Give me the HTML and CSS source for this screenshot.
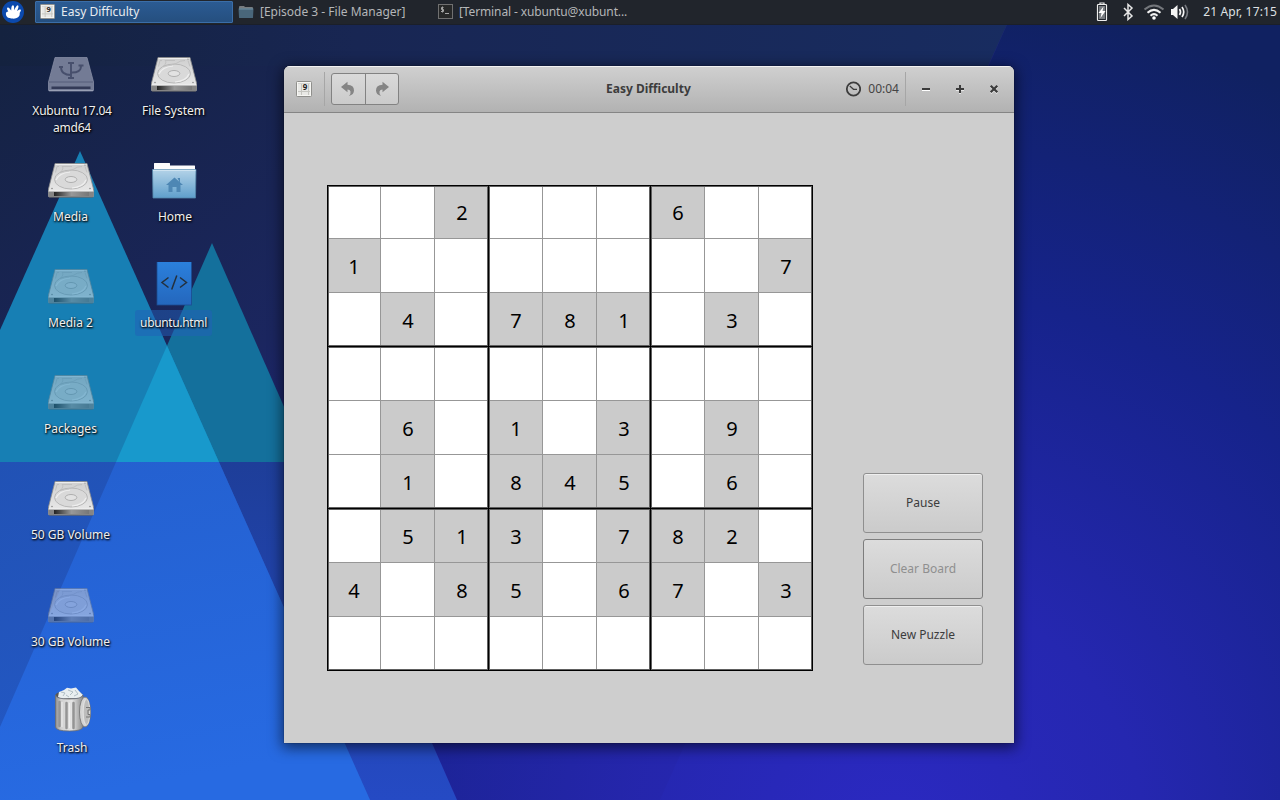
FILE: index.html
```html
<!DOCTYPE html>
<html lang="en">
<head>
<meta charset="utf-8">
<title>Easy Difficulty</title>
<link rel="stylesheet" href="styles.css">
</head>
<body>
<svg class="wallpaper" width="1280" height="800" viewBox="0 0 1280 800">
  <defs>
    <linearGradient id="wl" gradientUnits="userSpaceOnUse" x1="0" y1="0" x2="520" y2="800"><stop offset="0" stop-color="#14223f"/><stop offset=".45" stop-color="#1b265f"/><stop offset=".8" stop-color="#21249a"/><stop offset="1" stop-color="#24229f"/></linearGradient>
    <radialGradient id="wr" gradientUnits="userSpaceOnUse" cx="890" cy="840" r="850"><stop offset="0" stop-color="#2b29c2"/><stop offset=".3" stop-color="#2527b0"/><stop offset=".65" stop-color="#16238b"/><stop offset="1" stop-color="#102161"/></radialGradient>
    <linearGradient id="wt" x1="0" y1="0" x2="1" y2="0"><stop offset="0" stop-color="#14223f"/><stop offset=".35" stop-color="#182653"/><stop offset="1" stop-color="#182c60"/></linearGradient>
    <linearGradient id="wa" gradientUnits="userSpaceOnUse" x1="0" y1="462" x2="120" y2="740"><stop offset="0" stop-color="#2152b5"/><stop offset="1" stop-color="#2358c4"/></linearGradient>
    <linearGradient id="wo" gradientUnits="userSpaceOnUse" x1="0" y1="462" x2="60" y2="800"><stop offset="0" stop-color="#2460cf"/><stop offset="1" stop-color="#276ae2"/></linearGradient>
    <linearGradient id="wb" gradientUnits="userSpaceOnUse" x1="0" y1="462" x2="0" y2="800"><stop offset="0" stop-color="#1e3e99"/><stop offset="1" stop-color="#254ac4"/></linearGradient>
    <clipPath id="top"><rect width="1280" height="462"/></clipPath>
    <clipPath id="bot"><rect y="462" width="1280" height="338"/></clipPath>
    <clipPath id="inA"><path d="M80 151L370 800H-210z"/></clipPath>
  </defs>
  <rect width="1280" height="800" fill="url(#wr)"/>
  <path d="M0 0H1018L660 800H0z" fill="url(#wl)"/>
  <path d="M0 0H1018L988 66H0z" fill="url(#wt)"/>
  <path d="M457 800L400 670H1280V800z" fill="url(#wr)" opacity=".75"/>
  <g clip-path="url(#top)">
    <path d="M212 243L457 800H-32z" fill="#14709c"/>
    <path d="M80 151L370 800H-210z" fill="#177fb4"/>
    <path d="M212 243L457 800H-32z" fill="#1899cc" clip-path="url(#inA)"/>
  </g>
  <g clip-path="url(#bot)">
    <path d="M212 243L457 800H-32z" fill="url(#wb)"/>
    <path d="M80 151L370 800H-210z" fill="url(#wa)"/>
    <path d="M212 243L457 800H-32z" fill="url(#wo)" clip-path="url(#inA)"/>
  </g>
</svg>

<svg class="defs" width="0" height="0">
  <defs>
    <linearGradient id="dg" x1="0" y1="0" x2="0" y2="1"><stop offset="0" stop-color="#cfcfcf"/><stop offset="1" stop-color="#ececec"/></linearGradient>
    <linearGradient id="df" x1="0" y1="0" x2="1" y2="0"><stop offset="0" stop-color="#222"/><stop offset=".5" stop-color="#999"/><stop offset="1" stop-color="#777"/></linearGradient>
    <linearGradient id="fg" x1="0" y1="0" x2="0" y2="1"><stop offset="0" stop-color="#b4d3e8"/><stop offset="1" stop-color="#5f9fcc"/></linearGradient>
    <linearGradient id="hg" x1="0" y1="0" x2="0" y2="1"><stop offset="0" stop-color="#2b80dc"/><stop offset="1" stop-color="#2467bd"/></linearGradient>
    <linearGradient id="tg" x1="0" y1="0" x2="1" y2="0"><stop offset="0" stop-color="#8c8c8c"/><stop offset=".2" stop-color="#d0d0d0"/><stop offset=".6" stop-color="#e4e4e4"/><stop offset="1" stop-color="#8a8a8a"/></linearGradient>
    <symbol id="drive" viewBox="0 0 48 48">
      <path d="M8 7.500H40L46.500 33V40Q46.500 41 45.500 41H2.500Q1.500 41 1.500 40V33z" fill="url(#dg)" stroke="#8b8b8b" stroke-width=".8"/>
      <path d="M8.500 8.500H39.500" stroke="#eee"/>
      <ellipse cx="24" cy="23.500" rx="16.500" ry="9.500" fill="#d9d9d9" stroke="#b4b4b4" stroke-width=".9"/>
      <path d="M13 16q8 1 14-3q3-2.500 8-2.500M12 10.500h-2l-1.500 6M38 10.500l2 6M14 16q3-4 1-5.500h10" fill="none" stroke="#bbb" stroke-width=".8"/>
      <path d="M9 24q3-7 14-8M39 24q-3 7-14 8" stroke="#efefef" stroke-width="1.200" fill="none"/>
      <ellipse cx="24" cy="23.500" rx="5.800" ry="3" fill="#e2e2e2" stroke="#a9a9a9" stroke-width=".9"/>
      <circle cx="5" cy="32.500" r=".7" fill="#777"/><circle cx="43" cy="32.500" r=".7" fill="#777"/><circle cx="38" cy="9" r=".6" fill="#777"/>
      <path d="M1.500 35H46.500V40.500H1.500z" fill="#858585"/>
      <path d="M7 36H42V40H7z" fill="url(#df)"/>
      <path d="M1.500 35H46.500" stroke="#f2f2f2" stroke-width="1"/>
      <path d="M2 41H46" stroke="#555" stroke-width=".8"/>
    </symbol>
    <symbol id="sudoku" viewBox="0 0 16 16">
      <rect x=".5" y=".5" width="15" height="15" rx=".8" fill="#f6f6f3" stroke="#8f8f8c"/>
      <rect x="2" y="2" width="12" height="12" fill="#e9e9e6"/>
      <path d="M5.500 2v12M12.500 2v12M2 10.500h12" stroke="#c6c6c1" fill="none"/>
      <path d="M2 2.500h12" stroke="#d5d5d2"/>
      <text x="6.800" y="9" class="nine">9</text>
    </symbol>
  </defs>
</svg>

<header class="panel">
  <svg class="logo" width="24" height="24" viewBox="0 0 24 24"><circle cx="13" cy="12" r="11" fill="#0b49ad"/><path d="M6 15C5.500 12.500 6.500 11.500 8.300 11.500C7 9.500 6.500 8 7.700 7.500C9 7.200 10 9 11.200 10.500C11.200 7.500 11.600 5.200 13 5.300C14.300 5.400 14.200 8 14.200 10.300C15.200 8 16.800 4.800 18 5.400C19.200 6 18 8.800 17 11C18.600 9.700 20.500 9 20.900 10C21.300 11.200 19.500 12 19.700 13.500C20 17 16.500 19 12.500 18.600C9.500 18.400 7 18 6 15z" fill="#fff"/></svg>
  <div class="task active"><svg width="15" height="15"><use href="#sudoku"/></svg><span>Easy Difficulty</span></div>
  <div class="task"><svg width="16" height="14" viewBox="0 0 16 14"><path d="M1 3V2Q1 1 2 1H6L7 2H14Q15 2 15 3V4H1z" fill="#777c80"/><path d="M.5 3.500H15.500L15 12.500Q15 13 14.500 13H1.500Q1 13 1 12.500z" fill="#49667a"/><path d="M1 4h14" stroke="#7292a5"/></svg><span>[Episode 3 - File Manager]</span></div>
  <div class="task terminal"><svg width="15" height="15" viewBox="0 0 15 15"><rect x=".5" y=".5" width="14" height="14" fill="#272828" stroke="#707070"/><path d="M5.500 3.500H3.500V5.500H5.500V7.500H3M4.500 2.500v6M7 9.500h4" stroke="#a5a5a5" fill="none"/></svg><span>[Terminal - xubuntu@xubunt...</span></div>
  <div class="tray">
    <svg width="12" height="20" viewBox="0 0 12 20"><path d="M4 2V1H8V2" stroke="#eee" fill="none" stroke-width="1.200"/><rect x="1.500" y="2.500" width="9" height="16" rx=".8" fill="none" stroke="#eee" stroke-width="1.200"/><rect x="3" y="4" width="6" height="13" fill="#777b80"/><path d="M7.500 4.500L2.500 11H5.500L4.500 16L9.500 9H6.500z" fill="#fff"/></svg>
    <svg width="12" height="18" viewBox="0 0 12 18"><path d="M2 5L10 13L6 16.500V1.500L10 5L2 13" fill="none" stroke="#e6e6e6" stroke-width="1.500"/></svg>
    <svg width="22" height="18" viewBox="0 0 22 18"><path d="M1.500 6.500Q11-1.500 20.500 6.500" stroke="#74777c" stroke-width="2" fill="none"/><path d="M4.500 9.700Q11 4 17.500 9.700M7.500 12.700Q11 9.500 14.500 12.700" stroke="#f2f2f2" stroke-width="2" fill="none"/><circle cx="11" cy="15" r="1.800" fill="#fff"/></svg>
    <svg width="20" height="16" viewBox="0 0 20 16"><path d="M1 5H3L7.500 1V15L3 11H1z" fill="#f4f4f4"/><path d="M9.500 5Q11.500 8 9.500 11M12 3Q15.500 8 12 13" stroke="#f4f4f4" stroke-width="1.700" fill="none"/><path d="M15 1Q20 8 15 15" stroke="#777a80" stroke-width="1.600" fill="none"/></svg>
  </div>
  <time class="clock">21 Apr, 17:15</time>
</header>

<main class="desktop">
  <div class="column">
    <div class="item"><svg width="48" height="48" viewBox="0 0 48 48"><path d="M8 7.500H40L46.500 32V40Q46.500 41 45.500 41H2.500Q1.500 41 1.500 40V32z" fill="#737b95" stroke="#858ca3" stroke-width=".8"/><path d="M2 32H46" stroke="#575f7b"/><path d="M4.500 36.500H43.500V39H4.500z" fill="#333a57"/><path d="M2 40.500H46" stroke="#99a0b5"/><path d="M24 12V28M24 25Q14 25 14 17M24 22.500Q34 23 34 16M21 13h6M12 17h4M31.500 15.500h5M21 28h6" fill="none" stroke="#474f6c" stroke-width="1.900"/></svg><span class="tight">Xubuntu 17.04<br>amd64</span></div>
    <div class="item"><svg width="48" height="48"><use href="#drive"/></svg><span>Media</span></div>
    <div class="item"><svg class="faded" width="48" height="48"><use href="#drive"/></svg><span>Media 2</span></div>
    <div class="item"><svg class="faded" width="48" height="48"><use href="#drive"/></svg><span>Packages</span></div>
    <div class="item tall"><svg width="48" height="48"><use href="#drive"/></svg><span>50 GB Volume</span></div>
    <div class="item"><svg class="faded" width="48" height="48"><use href="#drive"/></svg><span>30 GB Volume</span></div>
    <div class="item trash"><svg width="48" height="48" viewBox="0 0 48 48"><ellipse cx="22" cy="8" rx="13.500" ry="4" fill="#555"/><path d="M11 10L12 5L17 3L20 .8L24 1.500L29 .5L32 4L36 8L33 11L14 11.500z" fill="#e8eef0"/><path d="M14 5l4 1-2 3M21 3l5 2-3 3M28 3l3 4-4 2M19 8l3 2" stroke="#a9b8be" fill="none" stroke-width=".9"/><path d="M8.500 8Q9 12 22 12Q35 12 36 8V40Q35 44 22.500 44Q9 44 8.500 40z" fill="url(#tg)" stroke="#6e6e6e" stroke-width=".8"/><path d="M12.500 15V39M19.500 16V41M26.500 16V41" stroke="#949494" stroke-width="2.500" stroke-linecap="round"/><path d="M15 15V40M22.500 16V41" stroke="#eee" stroke-width="1"/><ellipse cx="38" cy="25" rx="5.500" ry="15" fill="#d4d4d4" stroke="#777" stroke-width=".9"/><ellipse cx="39.500" cy="25" rx="3.300" ry="13" fill="#bcbcbc" stroke="#eee" stroke-width=".7"/><path d="M39 20.500h4v2.500h-2v4.500h2V30h-4" fill="none" stroke="#777" stroke-width="1"/></svg><span>Trash</span></div>
  </div>
  <div class="column">
    <div class="item"><svg width="48" height="48"><use href="#drive"/></svg><span>File System</span></div>
    <div class="item home"><svg width="48" height="48" viewBox="0 0 48 48"><path d="M4 14V7.500Q4 7 4.500 7H19.500Q20 7 20 7.500V9.500H44.500Q45 9.500 45 10V15H4z" fill="#fcfcfc"/><path d="M2.500 13.500H46L45.500 42H3z" fill="url(#fg)" stroke="#5487aa" stroke-width=".8"/><path d="M3 14.300H45.500" stroke="#d6e8f4"/><path d="M24.500 21.500L33 29H30.500V36H26.500V31H22.500V36H18.500V29H16L24.500 21.500M27.500 22H30V27z" fill="#4e87b4"/></svg><span>Home</span></div>
    <div class="item"><svg width="48" height="48" viewBox="0 0 48 48"><rect x="7" y="-.5" width="34.500" height="43.500" fill="url(#hg)" stroke="#1c4d91" stroke-width=".8"/><path d="M18.500 15.500L12 20.500L18.500 25.500M30 15.500L36.500 20.500L30 25.500M26.800 13.500L21.700 27.500" fill="none" stroke="#24303c" stroke-width="1.500"/></svg><span class="selected">ubuntu.html</span></div>
  </div>
</main>

<section class="window">
  <div class="titlebar">
    <svg class="appicon" width="16" height="16"><use href="#sudoku"/></svg>
    <i class="sep"></i>
    <div class="history">
      <button><svg width="16" height="16" viewBox="0 0 16 16"><path d="M1 6L7.500 .8V3.800Q14 4 14 9.500Q14 13.500 9 15Q11 12.500 10.500 10.500Q10 8.500 7.500 8.500V11.200z" fill="#858585"/></svg></button>
      <button><svg width="16" height="16" viewBox="0 0 16 16"><path d="M15 6L8.500 .8V3.800Q2 4 2 9.500Q2 13.500 7 15Q5 12.500 5.500 10.500Q6 8.500 8.500 8.500V11.200z" fill="#858585"/></svg></button>
    </div>
    <h1>Easy Difficulty</h1>
    <div class="timer"><svg width="16" height="16" viewBox="0 0 16 16"><circle cx="8.500" cy="8" r="6.700" fill="none" stroke="#3d3d3d" stroke-width="1.800"/><path d="M4.800 5L8.500 8.300H12" fill="none" stroke="#3d3d3d" stroke-width="1.200"/></svg><span>00:04</span></div>
    <i class="sep"></i>
    <div class="controls">
      <svg width="10" height="10" viewBox="0 0 10 10"><path d="M1 6H9" stroke="#fff" stroke-width="2"/><path d="M1 5H9" stroke="#3b3b3b" stroke-width="2"/></svg>
      <svg width="10" height="10" viewBox="0 0 10 10"><path d="M1 6H9M5 2V10" stroke="#e8e8e8" stroke-width="2"/><path d="M1 5H9M5 1V9" stroke="#3b3b3b" stroke-width="2"/></svg>
      <svg width="10" height="10" viewBox="0 0 10 10"><path d="M1.700 2.700L8.300 9.300M8.300 2.700L1.700 9.300" stroke="#e8e8e8" stroke-width="2"/><path d="M1.700 1.700L8.300 8.300M8.300 1.700L1.700 8.300" stroke="#3b3b3b" stroke-width="2.200"/></svg>
    </div>
  </div>
  <div class="content">
    <div class="board" id="board"></div>
    <div class="actions"><button>Pause</button><button disabled>Clear Board</button><button>New Puzzle</button></div>
  </div>
</section>
<script src="board.js"></script>
</body>
</html>
```
FILE: styles.css
```css
* { box-sizing: border-box; }
body { margin: 0; width: 1280px; height: 800px; overflow: hidden; font: 12px/17px "Noto Sans", sans-serif; background: #161f5c; }
button { font: inherit; padding: 0; margin: 0; }
svg { display: block; flex: none; }
.wallpaper { position: absolute; left: 0; top: 0; z-index: -1; }
.defs { position: absolute; }
.nine { font: bold 8px "Noto Sans", sans-serif; fill: #222; }

.panel { display: flex; align-items: center; height: 25px; padding: 0 3px 1px 0; background: #21252c; border-bottom: 1px solid #1b1f29; color: #b4b6b8; }
.logo { margin-right: 11px; }
.task { display: flex; align-items: center; gap: 6px; width: 200px; height: 22px; padding-left: 4px; border: 1px solid transparent; border-radius: 1px; white-space: nowrap; }
.task.active { width: 198px; color: #e8ecf0; background: linear-gradient(#2b5b93, #254f7f); border-color: #3b6ea8; }
.task.terminal { letter-spacing: -.12px; }
.tray { display: flex; align-items: center; gap: 9px; margin-left: auto; }
.tray svg:first-child { margin-right: 5px; }
.tray svg:nth-child(3) { margin-right: -4px; }
.clock { margin-left: 13px; color: #dfe1e3; letter-spacing: .14px; }

.desktop { position: absolute; left: 19px; top: 50px; display: flex; }
.column { width: 103px; }
.item { height: 106px; display: flex; flex-direction: column; align-items: center; text-align: center; color: #f0f0f0; }
.item.tall { height: 107px; }
.item span { margin-top: 4px; padding: 0 4px; white-space: nowrap; text-shadow: 1px 1px 2px #000, 0 1px 2px rgba(0,0,0,.7); }
.item span.tight { letter-spacing: -.22px; padding-left: 7px; }
.item.home span, .item.trash span { padding-left: 7px; }
.item span.selected { margin-top: 0; padding: 4px 5px 5px; border-radius: 3px; letter-spacing: -.35px; background: rgba(33,96,183,.5); }
.faded { opacity: .5; }

.window { position: absolute; left: 284px; top: 66px; width: 730px; height: 677px; border-radius: 6px 6px 0 0; background: #cecece; box-shadow: 0 0 1px #000, 0 3px 14px 2px rgba(0,0,0,.55); overflow: hidden; }
.titlebar { display: flex; align-items: center; height: 47px; padding-left: 12px; background: linear-gradient(#d0d0d0, #b2b2b2); border-bottom: 1px solid #858585; box-shadow: inset 0 1px #f2f2f2; color: #444; }
.appicon { margin-right: 12px; }
.sep { width: 1px; height: 34px; background: #a6a6a6; }
.history { display: flex; margin-left: 6px; width: 68px; height: 32px; border: 1px solid #828282; border-radius: 3px; background: linear-gradient(#dadada, #cbcbcb); }
.history button { flex: 1; display: flex; align-items: center; justify-content: center; border: 0; background: none; }
.history button + button { border-left: 1px solid #828282; }
.titlebar h1 { margin: 0 0 0 207px; padding-bottom: 2px; font-size: 12px; line-height: 17px; font-weight: 700; color: #3c3c3c; white-space: nowrap; }
.timer { display: flex; align-items: center; gap: 7px; margin-left: auto; margin-right: 6px; }
.timer span { padding-bottom: 2px; }
.controls { display: flex; gap: 24px; padding: 0 15px; }

.content { display: flex; align-items: flex-end; padding: 72px 0 0 43px; }
.board { display: grid; grid-template: repeat(9, 54px) / repeat(9, 54px); width: 486px; height: 486px; }
.cell {
  --left: 0 0 transparent; --top: 0 0 transparent;
  --left-soft: 0 0 transparent; --top-soft: 0 0 transparent;
  --right: inset -1px 0 #979797; --bottom: inset 0 -1px #979797;
  --right-soft: 0 0 transparent; --bottom-soft: 0 0 transparent;
  display: flex; align-items: center; justify-content: center; background: #fff; font-size: 20px; color: #000;
}
.cell {
  box-shadow: var(--left), var(--top), var(--right-strong, 0 0 transparent), var(--bottom-strong, 0 0 transparent),
    var(--left-soft), var(--top-soft), var(--right-soft), var(--bottom-soft), var(--right), var(--bottom);
}
.given { background: #cbcbcb; }
.box-right { --right-strong: inset -1px 0 #000; --right-soft: inset -2px 0 #606060; }
.box-bottom { --bottom-strong: inset 0 -1px #000; --bottom-soft: inset 0 -2px #606060; }
.box-left { --left-soft: inset 1px 0 #606060; }
.box-top { --top-soft: inset 0 1px #606060; }
.edge-left { --left: inset 1px 0 #000; --left-soft: inset 2px 0 #606060; }
.edge-top { --top: inset 0 1px #000; --top-soft: inset 0 2px #606060; }
.edge-right { --right-strong: inset -1px 0 #000; --right-soft: inset -2px 0 #606060; }
.edge-bottom { --bottom-strong: inset 0 -1px #000; --bottom-soft: inset 0 -2px #606060; }

.actions { display: flex; flex-direction: column; gap: 6px; margin: 0 0 6px 50px; }
.actions button { width: 120px; height: 60px; padding-bottom: 2px; border: 1px solid #8f8f8f; border-radius: 3px; background: linear-gradient(#dcdcdc, #cbcbcb); box-shadow: inset 0 1px #efefef; color: #3c3c3c; }
.actions button:disabled { color: #8f8f8f; border-color: #7d7d7d; box-shadow: none; }
```
FILE: board.js
```js
const rows = [
  "..2...6..",
  "1.......7",
  ".4.781.3.",
  ".........",
  ".6.1.3.9.",
  ".1.845.6.",
  ".513.782.",
  "4.85.67.3",
  "........."
];
const board = document.getElementById("board");
rows.forEach((row, y) => [...row].forEach((value, x) => {
  const cell = document.createElement("div");
  const names = ["cell"];
  if (value !== ".") { names.push("given"); cell.textContent = value; }
  if (x === 0) names.push("edge-left");
  if (y === 0) names.push("edge-top");
  if (x === 2 || x === 5) names.push("box-right");
  if (y === 2 || y === 5) names.push("box-bottom");
  if (x === 3 || x === 6) names.push("box-left");
  if (y === 3 || y === 6) names.push("box-top");
  if (x === 8) names.push("edge-right");
  if (y === 8) names.push("edge-bottom");
  cell.className = names.join(" ");
  board.append(cell);
}));
```
